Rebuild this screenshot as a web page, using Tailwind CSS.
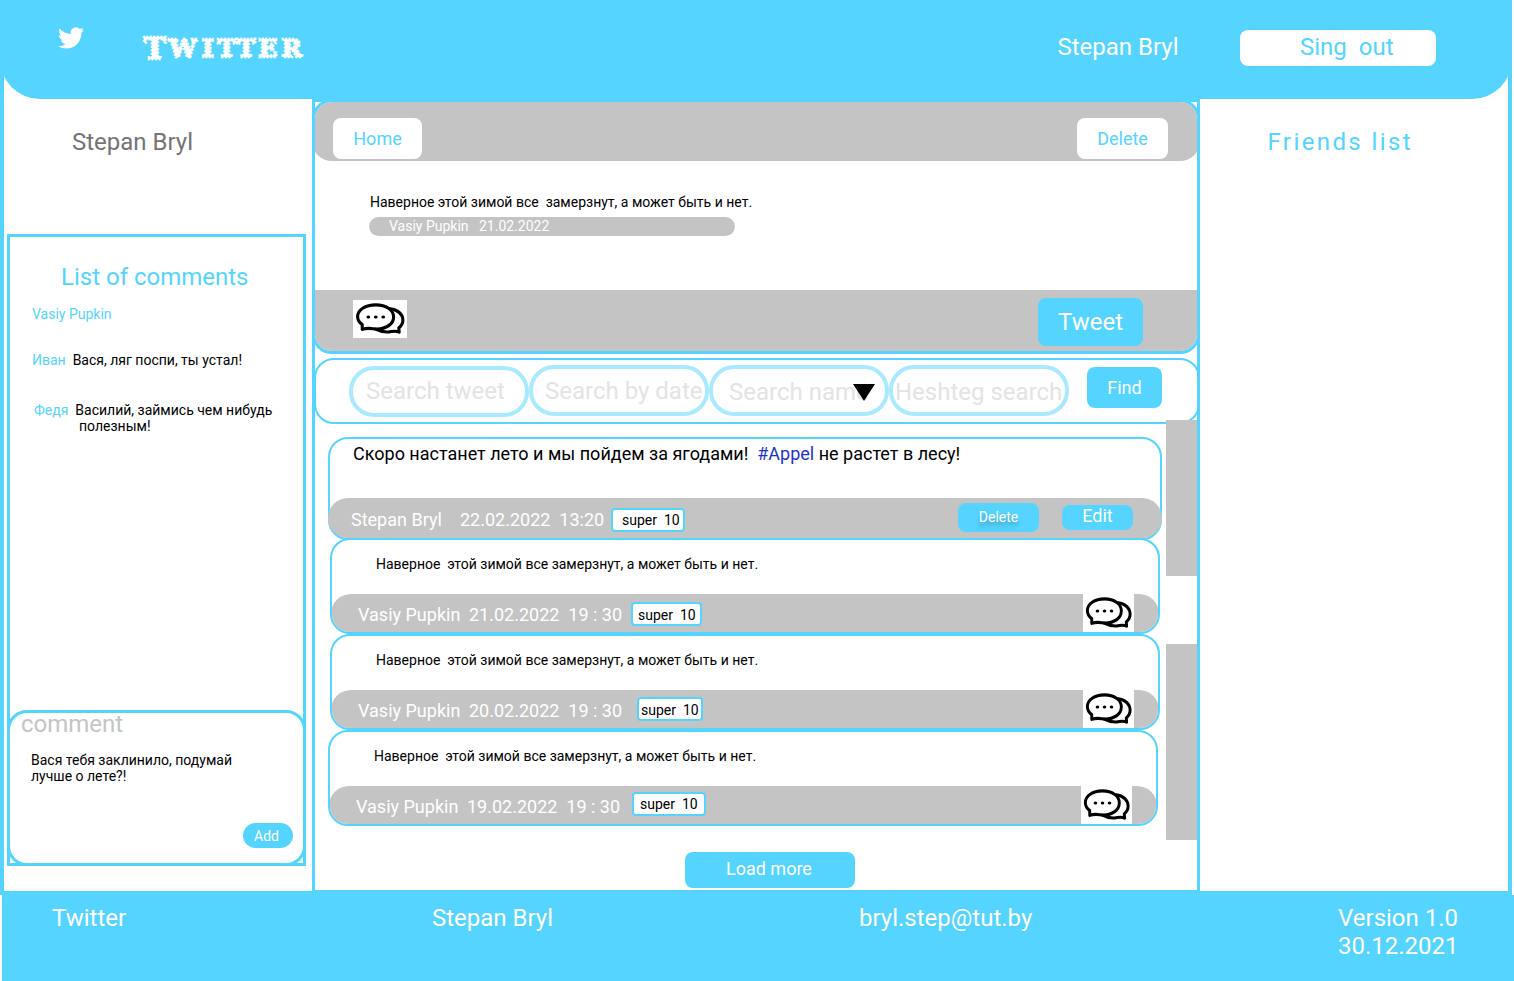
<!DOCTYPE html>
<html lang="en">
<head>
<meta charset="utf-8">
<title>Twitter</title>
<script src="https://cdn.jsdelivr.net/npm/@tailwindcss/browser@4"></script>
</head>
<body class="w-[1514px] h-[981px] overflow-hidden bg-white text-black text-[14px] leading-4 whitespace-pre font-[Roboto,sans-serif]"><svg class="hidden"><defs>
<symbol id="chat" viewBox="0 0 54 38" preserveAspectRatio="none"><g fill="none" stroke="#000" stroke-width="3.1" stroke-linejoin="round" stroke-linecap="round"><path d="M9.3 29.4 L9.2 24.6 C6.3 22.6 4.6 19.8 4.6 16.6 C4.6 9.8 12.3 4.9 22.7 4.9 C33 4.9 40.6 9.8 40.6 16.9 C40.6 24 33 29 24 29 C19.5 29 15.5 27.2 9.3 29.4z"/><path d="M37.2 8.9 C44.5 9.6 49.9 14.2 49.9 20 C49.9 23.4 48.2 26 45.8 28 L46.2 32.2 C42.5 30.2 40 31.4 36 31.9 C31 32.2 26 31 22.5 29.2"/></g><g><ellipse cx="15.3" cy="17" rx="1.9" ry="1.6"/><ellipse cx="22.8" cy="17" rx="1.9" ry="1.6"/><ellipse cx="30.2" cy="17" rx="1.9" ry="1.6"/></g></symbol>
</defs></svg><div class="w-[1512px] h-[895px] border-4 border-[#54d4ff]"><header class="-mx-1 -mt-1 h-[99px] rounded-b-[40px] bg-[#54d4ff] flex items-start text-white text-2xl leading-7"><svg class="ml-[58px] mt-[25px] w-[26px] h-[26px] shrink-0" viewBox="0 0 24 24" preserveAspectRatio="none" fill="#fff"><path d="M23.953 4.57a10 10 0 01-2.825.775 4.958 4.958 0 002.163-2.723c-.951.555-2.005.959-3.127 1.184a4.92 4.92 0 00-8.384 4.482C7.69 8.095 4.067 6.13 1.64 3.162a4.822 4.822 0 00-.666 2.475c0 1.71.87 3.213 2.188 4.096a4.904 4.904 0 01-2.228-.616v.06a4.923 4.923 0 003.946 4.827 4.996 4.996 0 01-2.212.085 4.936 4.936 0 004.604 3.417 9.867 9.867 0 01-6.102 2.105c-.39 0-.779-.023-1.17-.067a13.995 13.995 0 007.557 2.209c9.053 0 13.998-7.496 13.998-13.985 0-.21 0-.42-.015-.63A9.935 9.935 0 0024 4.59z"/></svg><svg class="ml-[56px] mt-[30px] w-[170px] h-[36px] shrink-0" viewBox="0 0 170 36" fill="#fff" stroke="#fff" stroke-width="2.4" stroke-dasharray="2.2 1.3" font-family="DejaVu Serif" font-weight="bold"><text y="29" x="3.5" font-size="30">T</text><text y="27" x="29 62 77.5 97 118.5 141.5" font-size="24.5">WITTER</text></svg><span class="ml-[747px] mt-[33px] w-[183px] pl-[0.5px]">Stepan Bryl</span><button class="mt-[30px] w-[196px] h-9 rounded-lg bg-white text-[#54d4ff] pl-[60px] pt-[3px] flex items-start">Sing  out</button></header><div class="flex h-[792px]"><aside class="w-[308px] shrink-0 pl-[3px] pt-[29px]"><h2 class="ml-[65px] text-2xl leading-7 text-[#747474]">Stepan Bryl</h2><section class="mt-[78px] w-[299px] h-[632px] border-[3px] border-[#54d4ff] flex flex-col"><h3 class="ml-[51px] mt-[26px] text-2xl leading-7 text-[#54d4ff]">List of comments</h3><p class="ml-[22px] mt-[15px] text-[#54d4ff]">Vasiy Pupkin</p><p class="ml-[22px] mt-[30px]"><span class="text-[#54d4ff]">Иван</span>  Вася, ляг поспи, ты устал!</p><p class="ml-[24px] mt-[34px]"><span class="text-[#54d4ff]">Федя</span>  Василий, займись чем нибудь</p><p class="ml-[69px]">полезным!</p><div class="-mx-[3px] -mb-[3px] mt-auto h-[156px] shrink-0 rounded-[20px] border-[3px] border-[#54d4ff] flex flex-col"><label class="ml-[11px] -mt-[3px] text-2xl leading-7 text-[#c4c4c4]">comment</label><p class="ml-[21px] mt-[14px]">Вася тебя заклинило, подумай
лучше о лете?!</p><button class="ml-[233px] mt-[39px] w-[50px] h-[25px] rounded-full bg-[#54d4ff] text-white pl-[11px] pt-[5px] flex items-start">Add</button></div></section></aside><main class="w-[888px] h-[794px] shrink-0 border-[3px] border-[#54d4ff]"><section class="-mx-[3px] -mt-[3px] h-[255px] overflow-hidden rounded-[20px] border-[3px] border-[#54d4ff]"><div class="-mx-[3px] h-[59px] rounded-b-[20px] bg-[#c4c4c4] flex justify-between pt-4 pl-[21px] pr-8 text-lg leading-[21px] text-[#54d4ff]"><button class="w-[89px] h-[41px] rounded-lg bg-white">Home</button><button class="w-[91px] h-[41px] rounded-lg bg-white">Delete</button></div><div class="h-[129px] pl-[54px] pt-[33px]"><p class="pl-px">Наверное этой зимой все  замерзнут, а может быть и нет.</p><div class="mt-[7px] w-[366px] h-[19px] rounded-full bg-[#c4c4c4] text-white pl-5 pt-px flex"><span class="w-[90px]">Vasiy Pupkin</span><span>21.02.2022</span></div></div><div class="h-[61px] bg-[#c4c4c4] pl-[38px] pr-[54px] pt-2 flex justify-between items-start"><svg class="mt-[2px] w-[54px] h-[38px] bg-white"><use href="#chat"/></svg><button class="w-[105px] h-12 rounded-lg bg-[#54d4ff] text-white text-2xl leading-7">Tweet</button></div></section><section class="-ml-px mt-1 w-[886px] h-[66px] rounded-[20px] border-2 border-[#54d4ff] flex items-start pl-[33px] pt-[5px] text-2xl leading-7 text-[#e3e3e3]"><div class="mt-px w-[180px] h-[51px] shrink-0 rounded-[25px] border-4 border-[#aaeaff] pl-[13px] pt-[7px]">Search tweet</div><div class="w-[180px] h-[51px] shrink-0 rounded-[25px] border-4 border-[#aaeaff] pl-3 pt-2">Search by date</div><div class="relative w-[180px] h-[51px] shrink-0 rounded-[25px] border-4 border-[#aaeaff] pl-4 pt-[9px]">Search name<svg class="absolute left-[140px] top-[15px] w-[22px] h-[17px]" viewBox="0 0 22 17"><path d="M0 0h22L11 17z"/></svg></div><div class="w-[180px] h-[51px] shrink-0 rounded-[25px] border-4 border-[#aaeaff] pl-[2px] pt-[9px]">Heshteg search</div><button class="ml-[18px] mt-[2px] w-[75px] h-[41px] rounded-lg bg-[#54d4ff] text-white text-lg leading-[21px]">Find</button></section><div class="flex"><div class="w-[851px] h-[466px] pl-[13px] pt-[13px]"><article class="w-[834px] h-[103px] rounded-[20px] border-2 border-[#54d4ff] text-lg leading-[21px]"><p class="ml-[23px] mt-1 h-[55px]">Скоро настанет лето и мы пойдем за ягодами!  <span class="text-[#1c35c9]">#Appel</span> не растет в лесу!</p><div class="-mx-[2px] h-10 rounded-[20px] bg-[#c4c4c4] flex items-start text-white pl-[23px]"><span class="mt-[11px] w-[109px]">Stepan Bryl</span><span class="mt-[11px] w-[151px]">22.02.2022  13:20</span><span class="mt-[10px] w-[74px] h-6 rounded border-2 border-[#54d4ff] bg-white text-black text-[14px] leading-4 pl-[9px] pt-[2px]">super  10</span><button class="ml-[273px] mt-[5px] w-[81px] h-[29px] rounded-lg bg-[#54d4ff] text-[14px] leading-4 pb-px text-shadow-[0_4px_4px_rgb(0_0_0/0.25)]">Delete</button><button class="ml-[23px] mt-[7px] w-[71px] h-[25px] rounded-lg bg-[#54d4ff] flex justify-center items-start">Edit</button></div></article><article class="-mt-[2px] ml-[2px] w-[830px] h-24 overflow-hidden rounded-[20px] border-2 border-[#54d4ff]"><p class="ml-11 mt-4 h-[38px]">Наверное  этой зимой все замерзнут, а может быть и нет.</p><div class="-mx-px h-[38px] rounded-t-[20px] bg-[#c4c4c4] flex items-start text-white text-lg leading-[21px] pl-[27px]"><span class="mt-[10px] w-[111px]">Vasiy Pupkin</span><span class="mt-[10px] w-[162px]">21.02.2022  19 : 30</span><span class="mt-2 w-[71px] h-6 rounded border-2 border-[#54d4ff] bg-white text-black text-[14px] leading-4 pl-[5px] pt-[3px]">super  10</span><svg class="ml-auto mr-[25px] w-[51px] h-[38px] bg-white"><use href="#chat"/></svg></div></article><article class="ml-[2px] w-[830px] h-24 overflow-hidden rounded-[20px] border-2 border-[#54d4ff]"><p class="ml-11 mt-4 h-[38px]">Наверное  этой зимой все замерзнут, а может быть и нет.</p><div class="-mx-px h-[38px] rounded-t-[20px] bg-[#c4c4c4] flex items-start text-white text-lg leading-[21px] pl-[27px]"><span class="mt-[10px] w-[111px]">Vasiy Pupkin</span><span class="mt-[10px] w-[168px]">20.02.2022  19 : 30</span><span class="mt-[7px] w-[66px] h-6 rounded border-2 border-[#54d4ff] bg-white text-black text-[14px] leading-4 pl-[2px] pt-[3px]">super  10</span><svg class="ml-auto mr-[25px] w-[51px] h-[38px] bg-white"><use href="#chat"/></svg></div></article><article class="w-[830px] h-24 overflow-hidden rounded-[20px] border-2 border-[#54d4ff]"><p class="ml-11 mt-4 h-[38px]">Наверное  этой зимой все замерзнут, а может быть и нет.</p><div class="-mx-px h-[38px] rounded-t-[20px] bg-[#c4c4c4] flex items-start text-white text-lg leading-[21px] pl-[27px]"><span class="mt-[10px] w-[111px]">Vasiy Pupkin</span><span class="mt-[10px] w-[165px]">19.02.2022  19 : 30</span><span class="mt-[6px] w-[74px] h-6 rounded border-2 border-[#54d4ff] bg-white text-black text-[14px] leading-4 pl-[6px] pt-[2px]">super  10</span><svg class="ml-auto mr-[25px] w-[51px] h-[38px] bg-white"><use href="#chat"/></svg></div></article><button class="ml-[357px] mt-[26px] w-[170px] h-9 rounded-lg bg-[#54d4ff] text-white text-lg leading-[21px] pl-[41px] pt-[6px] flex items-start">Load more</button></div><div class="-mt-1 w-[31px] flex flex-col gap-[68px]"><div class="h-[156px] bg-[#c4c4c4]"></div><div class="h-[196px] bg-[#c4c4c4]"></div></div></div></main><aside class="grow pl-[67.5px] pt-[29px]"><h2 class="text-2xl leading-7 tracking-[0.1em] text-[#54d4ff]">Friends list</h2></aside></div></div><footer class="ml-[2px] w-[1512px] h-[86px] bg-[#54d4ff] text-white text-2xl leading-7 flex pl-[50px] pt-[9px]"><span class="w-[380px]">Twitter</span><span class="w-[427px]">Stepan Bryl</span><span class="w-[479px]">bryl.step@tut.by</span><span>Version 1.0
30.12.2021</span></footer></body>
</html>
